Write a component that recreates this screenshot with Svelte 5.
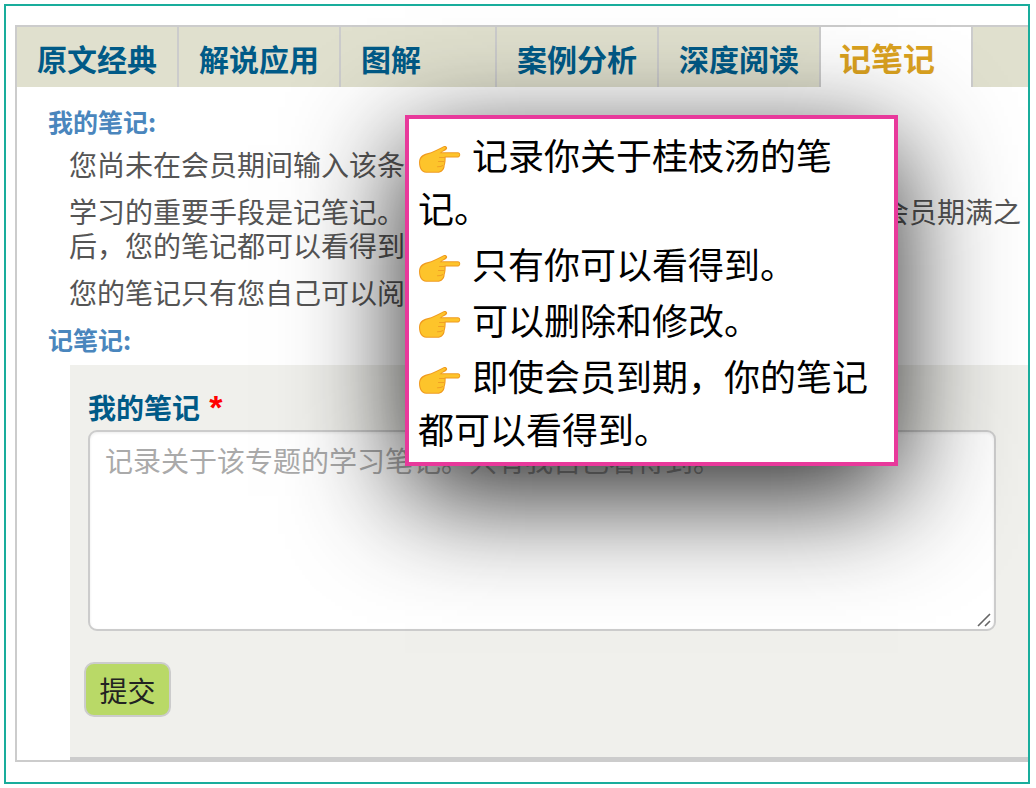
<script lang="ts">
  const tabs = [
    { label: '原文经典', width: 162 },
    { label: '解说应用', width: 162 },
    { label: '图解', width: 156 },
    { label: '案例分析', width: 162 },
    { label: '深度阅读', width: 162 },
    { label: '记笔记', width: 152, active: true }
  ];

  const tips = [
    '记录你关于桂枝汤的笔记。',
    '只有你可以看得到。',
    '可以删除和修改。',
    '即使会员到期，你的笔记都可以看得到。'
  ];
</script>

{#snippet hand()}
  <svg class="hand" viewBox="0 0 42 27" aria-hidden="true">
    <path fill="#f09a1e" d="M1 17C1 12 4 9 9 8 14 7 19 4 25 1c3-1 5 2 2 4l-4 2h16c3 0 3 5 0 5H27c0 3 0 5-1 8 0 4-3 7-7 7H8C3 27 1 22 1 17z" />
    <path fill="#fdc42b" d="M2 17C2 13 5 10 9 9 14 8 19 5 25 2c2-1 3 1 1 2l-5 4h18c2 0 2 3 0 3H26c0 3 0 6-1 9 0 3-3 6-6 6H8C4 26 2 21 2 17z" />
    <path fill="none" stroke="#f0a024" stroke-width="1" stroke-linecap="round" d="M21 12c2 0 4 0 5 0M20 16c2 0 4 0 5 0M19 21c2 0 4 0 5-1" />
  </svg>
{/snippet}

<div class="frame">
  <div class="panel">
    <nav class="tabs">
      {#each tabs as tab}
        <a class="tab" class:active={tab.active} style="width: {tab.width}px">{tab.label}</a>
      {/each}
    </nav>

    <div class="content">
      <h3>我的笔记:</h3>
      <p>您尚未在会员期间输入该条目的任何笔记。</p>
      <p>学习的重要手段是记笔记。您可以在这里记录学习的心得，即使在会员期满之后，您的笔记都可以看得到。</p>
      <p>您的笔记只有您自己可以阅读。</p>
      <h3>记笔记:</h3>

      <form class="note-form">
        <label for="note">我的笔记 <span class="req">*</span></label>
        <div class="field">
          <textarea id="note" placeholder="记录关于该专题的学习笔记。只有我自己看得到。"></textarea>
          <svg class="grip" viewBox="0 0 14 14" aria-hidden="true">
            <path d="M1 13 13 1M8 13l5-5" />
          </svg>
        </div>
        <button type="button">提交</button>
      </form>
    </div>
  </div>

  <div class="popup">
    {#each tips as tip}
      <div class="tip">{@render hand()}{tip}</div>
    {/each}
  </div>
</div>

<style>
  :global(body) {
    margin: 0;
    background: #fff;
  }

  .frame {
    position: relative;
    box-sizing: border-box;
    width: 1026px;
    height: 780px;
    margin: 4px 0 0 4px;
    padding: 19px 0 0 9px;
    border: 2px solid #19ad9c;
    overflow: hidden;
    font-family: "Noto Sans CJK SC", "Liberation Sans", sans-serif;
  }

  .panel {
    box-sizing: border-box;
    height: 737px;
    border-top: 2px solid #ccc;
    border-left: 2px solid #ccc;
    border-bottom: 2px solid #ccc;
  }

  .tabs {
    display: flex;
    height: 60px;
    background: #e0e0ce;
  }

  .tab {
    box-sizing: border-box;
    flex: none;
    padding-left: 20px;
    border-right: 2px solid #ccc;
    font-size: 30px;
    font-weight: 700;
    line-height: 62px;
    color: #005a87;
  }

  .tab.active {
    padding-left: 18px;
    background: #fff;
    font-size: 32px;
    line-height: 60px;
    color: #dba21f;
  }

  .content {
    box-sizing: border-box;
    height: 673px;
    padding-top: 14px;
    background: #fff;
  }

  h3 {
    margin: 0 0 0 31px;
    font-size: 25px;
    font-weight: 700;
    line-height: 40px;
    color: #4a86bd;
  }

  p {
    width: 959px;
    margin: 0 0 13px 52px;
    font-size: 28px;
    line-height: 34px;
    color: #555;
  }

  h3 + p {
    margin-top: 6px;
  }

  p + h3 {
    margin-top: -3px;
  }

  .note-form {
    box-sizing: border-box;
    height: 395px;
    margin: 6px 0 0 53px;
    padding: 19px 32px 0 18px;
    background: #f0f0ec;
    border-bottom: 3px solid #ccc;
  }

  label {
    display: block;
    font-size: 28px;
    font-weight: 700;
    line-height: 46px;
    color: #005a87;
  }

  .req {
    margin-left: 3px;
    color: #f00;
    font-family: "Liberation Sans", sans-serif;
    font-size: 34px;
    line-height: 28px;
  }

  .field {
    position: relative;
    width: 908px;
  }

  textarea {
    display: block;
    box-sizing: border-box;
    width: 908px;
    height: 201px;
    padding: 9px 15px;
    background: #fff;
    border: 2px solid #ccc;
    border-radius: 9px;
    box-shadow: inset 0 1px 3px rgba(0, 0, 0, 0.08);
    font: inherit;
    font-size: 28px;
    line-height: 38px;
    resize: none;
  }

  textarea::placeholder {
    color: #aaa;
    opacity: 1;
  }

  .grip {
    position: absolute;
    right: 5px;
    bottom: 4px;
    width: 14px;
    height: 14px;
    fill: none;
    stroke: #666;
    stroke-width: 1.6;
  }

  button {
    display: block;
    box-sizing: border-box;
    width: 87px;
    height: 55px;
    margin: 31px 0 0 -4px;
    padding: 0;
    background: #b9d967;
    border: 2px solid #ccc;
    border-radius: 10px;
    font: inherit;
    font-size: 28px;
    color: #222;
  }

  .popup {
    position: absolute;
    top: 109px;
    left: 399px;
    box-sizing: border-box;
    width: 493px;
    height: 351px;
    padding: 6px 9px 0;
    background: #fff;
    border: 4px solid #e8399b;
    box-shadow: 0 30px 105px rgba(0, 0, 0, 0.85);
    font-size: 36px;
    line-height: 53px;
    color: #000;
  }

  .hand {
    display: inline-block;
    width: 43px;
    height: 28px;
    margin-top: 20px;
    margin-right: 11px;
    vertical-align: -3px;
  }
</style>
